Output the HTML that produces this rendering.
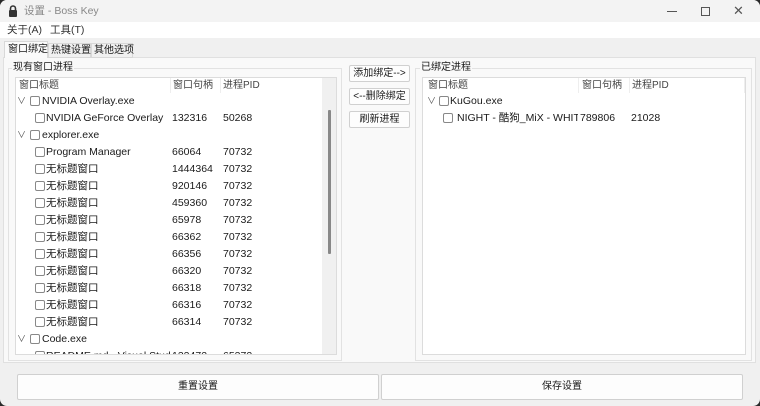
<!DOCTYPE html>
<html><head><meta charset="utf-8"><style>
*{margin:0;padding:0;box-sizing:border-box}
body{width:760px;height:406px;background:#2a2a2a;font-family:"Liberation Sans","Noto Sans CJK SC",sans-serif;font-size:10.5px;line-height:13px;color:#1a1a1a;position:relative;overflow:hidden}
.win{position:absolute;left:0;top:0;width:760px;height:406px;background:#f0f0f0;border-radius:7px;overflow:hidden}
.a{position:absolute;white-space:nowrap;line-height:13px}
.n{overflow:hidden;width:124px}
.title{left:0;top:0;width:760px;height:22px;background:#f3f3f3}
.menu{left:0;top:22px;width:760px;height:16px;background:#fff}
.list{background:#fff;border:1px solid #dcdcdc}
.cb{position:absolute;width:10px;height:10px;border:1px solid #888;border-radius:2px;background:#fff}
.btn{position:absolute;background:#fdfdfd;border:1px solid #d0d0d0;border-radius:2px;text-align:center;font-size:10px;line-height:15px}
.hd{color:#444}
.ar{position:absolute;font-size:9px;color:#555;line-height:13px}
</style></head><body><div class="win">
<div class="a title"></div>
<svg class="a" style="left:8px;top:5px" width="10" height="12" viewBox="0 0 10 12"><path d="M2.5 5V3.5a2.5 2.5 0 0 1 5 0V5" fill="none" stroke="#333" stroke-width="1.6"/><rect x="1" y="5" width="8" height="7" rx="1" fill="#333"/></svg>
<div class="a" style="left:24px;top:5px;color:#888">设置 - Boss Key</div>
<div class="a" style="left:667px;top:11px;width:10px;height:1px;background:#555"></div>
<div class="a" style="left:701px;top:7px;width:9px;height:9px;border:1px solid #555"></div>
<div class="a" style="left:733px;top:4px;font-size:13px;color:#555">✕</div>
<div class="a menu"></div>
<div class="a" style="left:7px;top:24px;color:#333">关于(A)</div>
<div class="a" style="left:50px;top:24px;color:#333">工具(T)</div>
<div class="a" style="left:3px;top:57px;width:753px;height:306px;background:#f9f9f9;border:1px solid #e0e0e0"></div>
<div class="a" style="left:4px;top:41px;width:44px;height:17px;background:#fafafa;border:1px solid #d8d8d8;border-bottom:none"></div>
<div class="a" style="left:8px;top:43px;font-size:10px">窗口绑定</div>
<div class="a" style="left:48px;top:43px;width:43px;height:15px;border:1px solid #d8d8d8"></div>
<div class="a" style="left:51px;top:44px;font-size:10px">热键设置</div>
<div class="a" style="left:91px;top:43px;width:42px;height:15px;border:1px solid #d8d8d8"></div>
<div class="a" style="left:94px;top:44px;font-size:10px">其他选项</div>
<div class="a" style="left:8px;top:68px;width:334px;height:293px;border:1px solid #e2e2e2"></div>
<div class="a" style="left:12px;top:61px;background:#f9f9f9;padding:0 1px;font-size:10px">现有窗口进程</div>
<div class="a list" style="left:15px;top:77px;width:322px;height:278px"></div>
<div class="a" style="left:322px;top:78px;width:14px;height:276px;background:#f0f0f0"></div>
<div class="a" style="left:328px;top:110px;width:3px;height:144px;background:#888;border-radius:1px"></div>
<div class="a" style="left:170px;top:78px;width:1px;height:15px;background:#eee"></div>
<div class="a" style="left:220px;top:78px;width:1px;height:15px;background:#eee"></div>
<div class="a hd" style="left:19px;top:79px;font-size:10px">窗口标题</div>
<div class="a hd" style="left:173px;top:79px;font-size:10px">窗口句柄</div>
<div class="a hd" style="left:223px;top:79px;font-size:10px">进程PID</div>
<div class="a" style="left:16px;top:94px;width:305px;height:260px;overflow:hidden">
<div style="position:relative">
<span class="ar" style="left:1px;top:1px">∨</span><span class="cb" style="left:14px;top:2px"></span><span class="a" style="left:26px;top:1px">NVIDIA Overlay.exe</span>
<span class="cb" style="left:19px;top:19px"></span><span class="a n" style="left:30px;top:18px">NVIDIA GeForce Overlay</span><span class="a" style="left:156px;top:18px">132316</span><span class="a" style="left:207px;top:18px">50268</span>
<span class="ar" style="left:1px;top:35px">∨</span><span class="cb" style="left:14px;top:36px"></span><span class="a" style="left:26px;top:35px">explorer.exe</span>
<span class="cb" style="left:19px;top:53px"></span><span class="a n" style="left:30px;top:52px">Program Manager</span><span class="a" style="left:156px;top:52px">66064</span><span class="a" style="left:207px;top:52px">70732</span>
<span class="cb" style="left:19px;top:70px"></span><span class="a n" style="left:30px;top:69px">无标题窗口</span><span class="a" style="left:156px;top:69px">1444364</span><span class="a" style="left:207px;top:69px">70732</span>
<span class="cb" style="left:19px;top:87px"></span><span class="a n" style="left:30px;top:86px">无标题窗口</span><span class="a" style="left:156px;top:86px">920146</span><span class="a" style="left:207px;top:86px">70732</span>
<span class="cb" style="left:19px;top:104px"></span><span class="a n" style="left:30px;top:103px">无标题窗口</span><span class="a" style="left:156px;top:103px">459360</span><span class="a" style="left:207px;top:103px">70732</span>
<span class="cb" style="left:19px;top:121px"></span><span class="a n" style="left:30px;top:120px">无标题窗口</span><span class="a" style="left:156px;top:120px">65978</span><span class="a" style="left:207px;top:120px">70732</span>
<span class="cb" style="left:19px;top:138px"></span><span class="a n" style="left:30px;top:137px">无标题窗口</span><span class="a" style="left:156px;top:137px">66362</span><span class="a" style="left:207px;top:137px">70732</span>
<span class="cb" style="left:19px;top:155px"></span><span class="a n" style="left:30px;top:154px">无标题窗口</span><span class="a" style="left:156px;top:154px">66356</span><span class="a" style="left:207px;top:154px">70732</span>
<span class="cb" style="left:19px;top:172px"></span><span class="a n" style="left:30px;top:171px">无标题窗口</span><span class="a" style="left:156px;top:171px">66320</span><span class="a" style="left:207px;top:171px">70732</span>
<span class="cb" style="left:19px;top:189px"></span><span class="a n" style="left:30px;top:188px">无标题窗口</span><span class="a" style="left:156px;top:188px">66318</span><span class="a" style="left:207px;top:188px">70732</span>
<span class="cb" style="left:19px;top:206px"></span><span class="a n" style="left:30px;top:205px">无标题窗口</span><span class="a" style="left:156px;top:205px">66316</span><span class="a" style="left:207px;top:205px">70732</span>
<span class="cb" style="left:19px;top:223px"></span><span class="a n" style="left:30px;top:222px">无标题窗口</span><span class="a" style="left:156px;top:222px">66314</span><span class="a" style="left:207px;top:222px">70732</span>
<span class="ar" style="left:1px;top:239px">∨</span><span class="cb" style="left:14px;top:240px"></span><span class="a" style="left:26px;top:239px">Code.exe</span>
<span class="cb" style="left:19px;top:257px"></span><span class="a n" style="left:30px;top:256px">README.md - Visual Studio Code</span><span class="a" style="left:156px;top:256px">132472</span><span class="a" style="left:207px;top:256px">65372</span>
</div></div>
<div class="btn" style="left:349px;top:65px;width:61px;height:17px">添加绑定--&gt;</div>
<div class="btn" style="left:349px;top:88px;width:61px;height:17px">&lt;--删除绑定</div>
<div class="btn" style="left:349px;top:111px;width:61px;height:17px">刷新进程</div>
<div class="a" style="left:415px;top:68px;width:337px;height:293px;border:1px solid #e2e2e2"></div>
<div class="a" style="left:420px;top:61px;background:#f9f9f9;padding:0 1px;font-size:10px">已绑定进程</div>
<div class="a list" style="left:422px;top:77px;width:324px;height:278px"></div>
<div class="a" style="left:578px;top:78px;width:1px;height:15px;background:#eee"></div>
<div class="a" style="left:629px;top:78px;width:1px;height:15px;background:#eee"></div>
<div class="a" style="left:744px;top:78px;width:1px;height:15px;background:#eee"></div>
<div class="a hd" style="left:428px;top:79px;font-size:10px">窗口标题</div>
<div class="a hd" style="left:582px;top:79px;font-size:10px">窗口句柄</div>
<div class="a hd" style="left:632px;top:79px;font-size:10px">进程PID</div>
<span class="ar" style="left:427px;top:95px">∨</span><span class="cb" style="left:439px;top:96px"></span><span class="a" style="left:450px;top:95px">KuGou.exe</span>
<span class="cb" style="left:443px;top:113px"></span><span class="a" style="left:457px;top:112px;width:121px;overflow:hidden">NIGHT - 酷狗_MiX - WHITE</span><span class="a" style="left:580px;top:112px">789806</span><span class="a" style="left:631px;top:112px">21028</span>
<div class="btn" style="left:17px;top:374px;width:362px;height:26px;line-height:24px">重置设置</div>
<div class="btn" style="left:381px;top:374px;width:362px;height:26px;line-height:24px">保存设置</div>
</div></body></html>
